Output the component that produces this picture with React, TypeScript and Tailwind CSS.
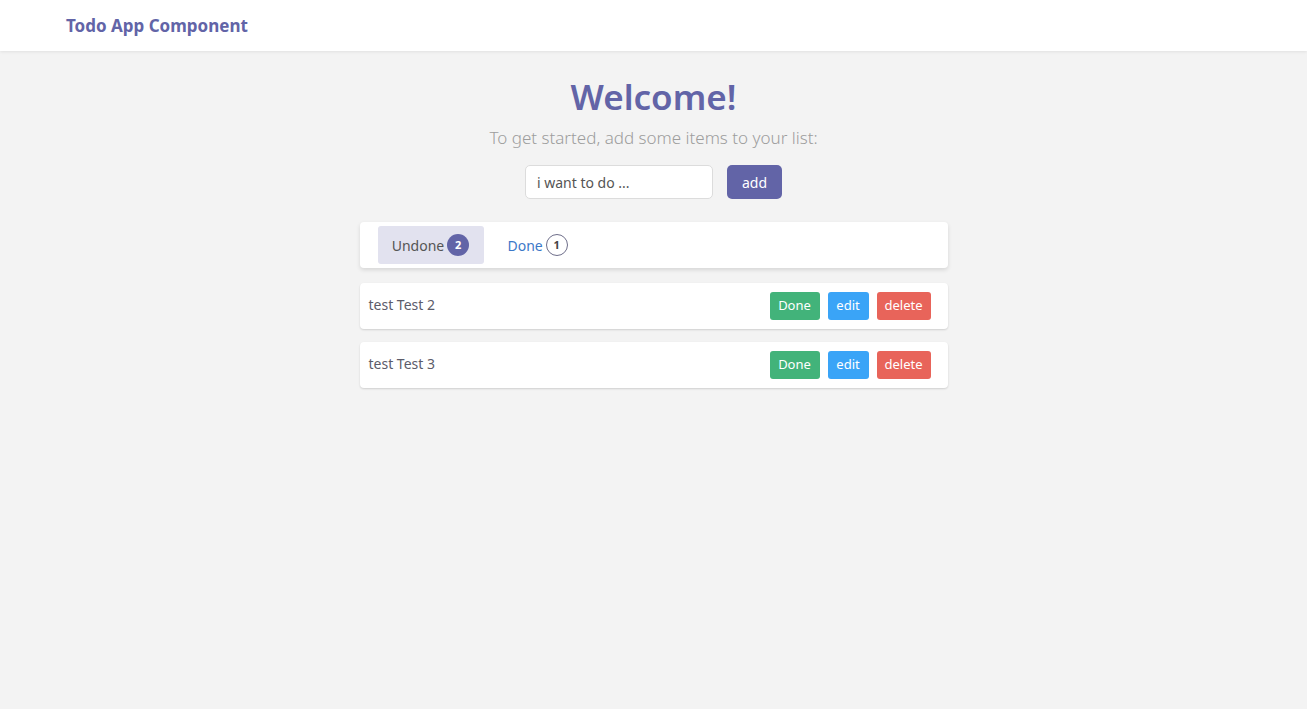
import React from "react";

export default function App() {
  const font = { fontFamily: '"Segoe UI", "Noto Sans", "Open Sans", sans-serif' };
  const items = ["test Test 2", "test Test 3"];
  return (
    <div className="min-h-[709px] bg-[#f3f3f3]" style={font}>
      <nav className="h-[51px] bg-white shadow-[0_1px_3px_rgba(0,0,0,0.08)] flex items-center pl-[66px]">
        <span className="text-[17px] font-bold text-[#6264a7]">Todo App Component</span>
      </nav>
      <div className="flex flex-col items-center">
        <h1 className="mt-[22px] text-[35px] leading-[48px] font-semibold text-[#6264a7]">Welcome!</h1>
        <p className="mt-[5px] text-[17px] leading-[24px] font-light text-[#9d9d9d]">To get started, add some items to your list:</p>
        <div className="mt-[15px] flex gap-[14px]">
          <div className="w-[188px] h-[34px] bg-white border border-[#dcdcdc] rounded-[5px] flex items-center pl-[11px] text-[14px] text-[#555]">i want to do ...</div>
          <button className="w-[55px] h-[34px] bg-[#6264a7] rounded-[5px] text-white text-[14px]">add</button>
        </div>
        <div className="mt-[23px] w-[588px] flex flex-col">
          <div className="h-[46px] bg-white rounded-[4px] shadow-[0_2px_4px_rgba(0,0,0,0.12)] flex items-center pl-[18px] gap-[12px]">
            <div className="h-[38px] w-[106px] bg-[#e2e2ef] rounded-[3px] flex items-center justify-center gap-[3px] text-[14px] text-[#555]">
              <span>Undone</span>
              <span className="w-[22px] h-[22px] rounded-full bg-[#6264a7] text-white text-[11px] font-bold flex items-center justify-center">2</span>
            </div>
            <div className="h-[38px] px-[12px] flex items-center gap-[3px] text-[14px] text-[#3c78c8]">
              <span>Done</span>
              <span className="w-[22px] h-[22px] rounded-full border border-[#6e6e8a] text-[#444] text-[11px] font-bold flex items-center justify-center">1</span>
            </div>
          </div>
          <div className="mt-[15px] flex flex-col gap-[13px]">
            {items.map((t) => (
              <div key={t} className="h-[46px] bg-white rounded-[4px] shadow-[0_1px_2px_rgba(0,0,0,0.15)] flex items-start justify-between pl-[9px] pr-[17px]">
                <span className="mt-[11px] text-[14px] text-[#5c5c6a]">{t}</span>
                <div className="mt-[9px] flex gap-[8px]">
                  <button className="w-[50px] h-[28px] rounded-[3px] bg-[#42b37a] text-white text-[13px]">Done</button>
                  <button className="w-[41px] h-[28px] rounded-[3px] bg-[#3aa4f7] text-white text-[13px]">edit</button>
                  <button className="w-[54px] h-[28px] rounded-[3px] bg-[#e8645a] text-white text-[13px]">delete</button>
                </div>
              </div>
            ))}
          </div>
        </div>
      </div>
    </div>
  );
}
